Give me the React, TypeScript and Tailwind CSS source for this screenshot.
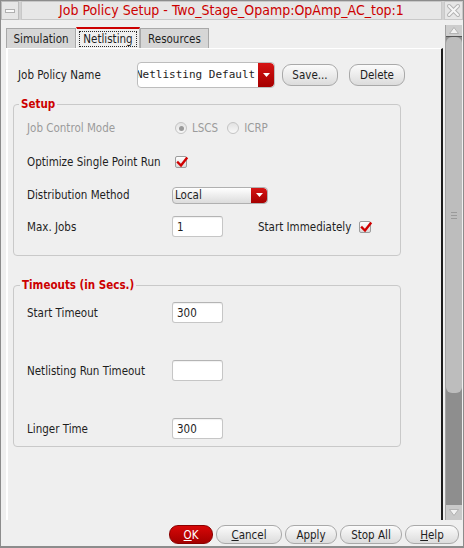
import React from "react";

const FONT = "font-['DejaVu_Sans_Condensed','DejaVu_Sans',sans-serif] font-stretch-condensed";
const MONO = "font-['DejaVu_Sans_Mono',monospace]";

function CheckBox() {
  return (
    <span className="relative inline-block w-[12px] h-[12px] border border-[#9c9c9c] rounded-[2px] bg-linear-to-b from-[#ffffff] to-[#dadada]">
      <svg width="14" height="14" viewBox="0 0 14 14" className="absolute left-[-1px] top-[-2px]">
        <path d="M3 7.5 L6 10.5 L11.5 3.5" stroke="#d00000" strokeWidth="2.4" fill="none" strokeLinecap="square" />
      </svg>
    </span>
  );
}

function Radio({ on }: { on?: boolean }) {
  return (
    <span className="inline-flex items-center justify-center w-[12px] h-[12px] rounded-full border border-[#c4c4c4] bg-linear-to-b from-[#e2e2e2] to-[#f8f8f8]">
      {on && <span className="w-[5px] h-[5px] rounded-full bg-[#9a9a9a]" />}
    </span>
  );
}

function RedArrow() {
  return (
    <span className="w-[16px] self-stretch flex items-center justify-center bg-linear-to-b from-[#d61414] to-[#a50000] rounded-r-[4px]">
      <svg width="7" height="4" viewBox="0 0 7 4">
        <path d="M0 0 H7 L3.5 4 Z" fill="#ffffff" />
      </svg>
    </span>
  );
}

function Entry({ value }: { value?: string }) {
  return (
    <div className="w-[51px] h-[21px] border border-[#c6c6c6] border-t-[#b4b4b4] rounded-[3px] bg-white flex items-center pl-[4px] shadow-[inset_0_1px_1px_rgba(0,0,0,0.06)]">
      {value}
    </div>
  );
}

function Button({ children, className }: { children: React.ReactNode; className: string }) {
  return (
    <div
      className={`flex items-center justify-center rounded-[9px] border border-[#a9a9a9] bg-linear-to-b from-[#fbfbfb] to-[#dcdcdc] text-[#1e1e1e] ${className}`}
    >
      {children}
    </div>
  );
}

export default function App() {
  return (
    <div
      className={`w-[464px] h-[548px] bg-[#efefef] border border-[#8c8c8c] border-b-2 flex flex-col text-[#1e1e1e] text-[11.5px] leading-[14px] ${FONT}`}
    >
      {/* Title bar */}
      <div className="h-[19px] flex gap-[2px] bg-[#d2d2d2]">
        <div className="w-[18px] border border-[#bcbcbc] bg-[#e6e6e6] flex items-center justify-center">
          <span className="w-[10px] h-[4px] border border-[#b0b0b0] bg-[#fafafa]" />
        </div>
        <div className="flex-1 border border-[#c8c8c8] bg-[#e7e7e7] flex items-center justify-center text-[#cc0000] text-[14px] leading-[17px]">
          Job Policy Setup - Two_Stage_Opamp:OpAmp_AC_top:1
        </div>
        <div className="w-[19px] border border-[#c8c8c8] bg-[#e6e6e6] flex items-center justify-center">
          <svg width="15" height="15" viewBox="0 0 15 15">
            <path d="M3 3 L12 12 M12 3 L3 12" stroke="#b4b4b4" strokeWidth="4" strokeLinecap="round" />
            <path d="M3 3 L12 12 M12 3 L3 12" stroke="#f6f6f6" strokeWidth="2" strokeLinecap="round" />
          </svg>
        </div>
      </div>

      {/* Middle */}
      <div className="h-[500px] flex">
        <div className="w-[442px] flex flex-col pl-[5px] pt-[7px]">
          {/* Tabs */}
          <div className="h-[21px] flex items-end">
            <div className="w-[70px] h-[20px] bg-[#d6d6d6] border border-b-0 border-[#a8a8a8] flex items-center justify-center">
              Simulation
            </div>
            <div className="w-[64px] h-[21px] bg-[#efefef] border-t-2 border-t-[#cc0000] border-l border-l-[#f8f8f8] border-r border-r-[#b4b4b4] flex items-start justify-center pt-[2px]">
              <div className="w-[58px] h-[16px] border border-dotted border-[#2a2a2a] flex items-center justify-center">
                Netlisting
              </div>
            </div>
            <div className="w-[69px] h-[20px] bg-[#d6d6d6] border border-b-0 border-[#a8a8a8] flex items-center justify-center">
              Resources
            </div>
          </div>

          {/* Pane */}
          <div className="flex-1 border-t border-t-white border-l-2 border-l-white border-r-2 border-r-[#1c1c1c] flex flex-col">
            {/* Job policy name row */}
            <div className="mt-[13px] h-[26px] flex items-center pl-[10px]">
              <div className="w-[119px]">Job Policy Name</div>
              <div className="w-[138px] h-[26px] flex border border-[#bdbdbd] rounded-[4px] bg-white overflow-hidden">
                <div className={`flex-1 flex items-center overflow-hidden whitespace-nowrap text-[11px] ${MONO}`}>
                  <span className="ml-[-2px]">Netlisting Default</span>
                </div>
                <RedArrow />
              </div>
              <Button className="ml-[7px] w-[56px] h-[22px]">Save...</Button>
              <Button className="ml-[11px] w-[56px] h-[22px]">Delete</Button>
            </div>

            {/* Setup */}
            <fieldset className="ml-[5px] mt-[9px] w-[388px] border border-[#c9c9c9] rounded-[4px] p-0">
              <legend className="ml-[5px] px-[2px] font-bold text-[#cc0000] leading-[14px]">Setup</legend>
              <div className="pl-[13px] pb-[18px] flex flex-col">
                <div className="mt-[6px] h-[22px] flex items-center text-[#9b9b9b]">
                  <div className="w-[145px]">Job Control Mode</div>
                  <span className="ml-[3px] flex items-center">
                    <Radio on />
                  </span>
                  <span className="ml-[5px]">LSCS</span>
                  <span className="ml-[9px] flex items-center">
                    <Radio />
                  </span>
                  <span className="ml-[5px]">ICRP</span>
                </div>
                <div className="mt-[12px] h-[22px] flex items-center">
                  <div className="w-[145px]">Optimize Single Point Run</div>
                  <span className="ml-[3px] flex items-center">
                    <CheckBox />
                  </span>
                </div>
                <div className="mt-[11px] h-[22px] flex items-center">
                  <div className="w-[145px]">Distribution Method</div>
                  <div className="w-[96px] h-[17px] flex border border-[#b0b0b0] rounded-[4px] bg-linear-to-b from-[#ffffff] to-[#dcdcdc] overflow-hidden">
                    <div className="flex-1 flex items-center pl-[2px]">Local</div>
                    <RedArrow />
                  </div>
                </div>
                <div className="mt-[10px] h-[21px] flex items-center">
                  <div className="w-[145px]">Max. Jobs</div>
                  <Entry value="1" />
                  <span className="ml-[35px]">Start Immediately</span>
                  <span className="ml-[8px] flex items-center">
                    <CheckBox />
                  </span>
                </div>
              </div>
            </fieldset>

            {/* Timeouts */}
            <fieldset className="ml-[5px] mt-[22px] w-[388px] border border-[#c9c9c9] rounded-[4px] p-0">
              <legend className="ml-[6px] px-[2px] font-bold text-[#cc0000] leading-[14px]">Timeouts (in Secs.)</legend>
              <div className="pl-[13px] pb-[7px] flex flex-col">
                <div className="mt-[10px] h-[21px] flex items-center">
                  <div className="w-[145px]">Start Timeout</div>
                  <Entry value="300" />
                </div>
                <div className="mt-[37px] h-[21px] flex items-center">
                  <div className="w-[145px]">Netlisting Run Timeout</div>
                  <Entry />
                </div>
                <div className="mt-[37px] h-[21px] flex items-center">
                  <div className="w-[145px]">Linger Time</div>
                  <Entry value="300" />
                </div>
              </div>
            </fieldset>
          </div>
        </div>

        {/* Scrollbar */}
        <div className="ml-[2px] mt-[5px] w-[17px] h-[495px] flex flex-col bg-[#8e8e8e] border-l border-[#a4a4a4]">
          <div className="h-[11px] bg-[#cdcdcd] flex items-center justify-center">
            <svg width="10" height="7" viewBox="0 0 10 7">
              <path d="M5 0.5 L9.5 6.5 H0.5 Z" fill="#f2f2f2" stroke="#a8a8a8" strokeWidth="0.8" />
            </svg>
          </div>
          <div className="h-[1px] bg-[#555555]" />
          <div className="h-[356px] bg-[#bdbdbd] rounded-[6px] flex flex-col items-center justify-center gap-[2px]">
            <span className="w-[6px] h-[1px] bg-[#9a9a9a]" />
            <span className="w-[6px] h-[1px] bg-[#9a9a9a]" />
            <span className="w-[6px] h-[1px] bg-[#9a9a9a]" />
          </div>
          <div className="flex-1" />
          <div className="h-[15px] bg-[#c9c9c9] flex items-center justify-center">
            <svg width="10" height="7" viewBox="0 0 10 7">
              <path d="M5 6.5 L9.5 0.5 H0.5 Z" fill="#f2f2f2" stroke="#a8a8a8" strokeWidth="0.8" />
            </svg>
          </div>
        </div>
      </div>

      {/* Bottom buttons */}
      <div className="h-[26px] flex justify-end items-start pt-[5px] pr-[4px] gap-[3px]">
        <div className="w-[44px] h-[19px] rounded-[9px] border border-[#8a0000] bg-linear-to-b from-[#d80808] to-[#a40000] text-white flex items-center justify-center">
          <span>
            <span className="underline">O</span>K
          </span>
        </div>
        <Button className="w-[66px] h-[19px]">
          <span>
            <span className="underline">C</span>ancel
          </span>
        </Button>
        <Button className="w-[52px] h-[19px]">Apply</Button>
        <Button className="w-[62px] h-[19px]">Stop All</Button>
        <Button className="w-[54px] h-[19px]">
          <span>
            <span className="underline">H</span>elp
          </span>
        </Button>
      </div>
    </div>
  );
}
